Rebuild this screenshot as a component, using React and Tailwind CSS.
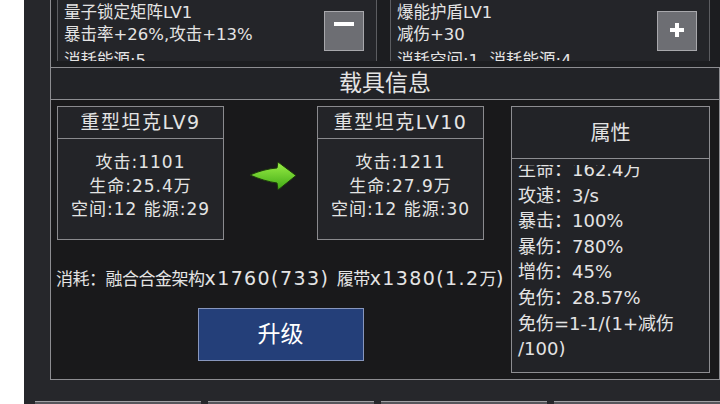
import { Fragment } from 'react'

const MODULES = [
  { name: '量子锁定矩阵LV1', effect: '暴击率+26%,攻击+13%', cost: '消耗能源:5', action: 'minus' },
  { name: '爆能护盾LV1', effect: '减伤+30', cost: '消耗空间:1, 消耗能源:4', action: 'plus' },
]

const TANKS = [
  { title: '重型坦克LV9', atk: '1101', hp: '25.4万', space: 12, energy: 29 },
  { title: '重型坦克LV10', atk: '1211', hp: '27.9万', space: 12, energy: 30 },
]

const ATTRS = [
  ['生命', '162.4万'],
  ['攻速', '3/s'],
  ['暴击', '100%'],
  ['暴伤', '780%'],
  ['增伤', '45%'],
  ['免伤', '28.57%'],
]

function ModuleCard({ mod }) {
  return (
    <div className="w-[320px] shrink-0 flex border border-[#5c5d61] bg-[#242529] pl-[6px] pr-[12px] pt-[5px] pb-[6px]">
      <div className="flex-1 min-w-0 text-[16.5px] leading-[22px] whitespace-nowrap">
        <div>{mod.name}</div>
        <div>{mod.effect}</div>
        <div className="mt-[4px]">{mod.cost}</div>
      </div>
      <button className="w-[40px] h-[40px] mt-[9px] shrink-0 flex justify-center bg-[#6d6e73] border border-[#a8a8ac]">
        {mod.action === 'minus' ? (
          <span className="mt-[10px] w-[20px] h-[4px] bg-white" />
        ) : (
          <svg width="14" height="14" viewBox="0 0 14 14" className="mt-[11px]">
            <path d="M5 0h4v5h5v4H9v5H5V9H0V5h5z" fill="#fff" />
          </svg>
        )}
      </button>
    </div>
  )
}

function TankCard({ tank }) {
  return (
    <div className="w-[167px] h-[134px] shrink-0 flex flex-col border border-[#8a8a8e] bg-[#232428]">
      <div className="h-[32px] shrink-0 flex items-center justify-center border-b border-[#8a8a8e] text-[19px] tracking-[1.5px]">
        {tank.title}
      </div>
      <div className="flex-1 pt-[12px] text-center text-[17px] leading-[23.5px] tracking-[1px]">
        <div>攻击:{tank.atk}</div>
        <div>生命:{tank.hp}</div>
        <div>空间:{tank.space} 能源:{tank.energy}</div>
      </div>
    </div>
  )
}

function UpgradeArrow() {
  return (
    <svg width="50" height="32" viewBox="0 0 50 32">
      <defs>
        <linearGradient id="arrowFill" x1="0" y1="0" x2="0" y2="1">
          <stop offset="0" stopColor="#9bef46" />
          <stop offset="1" stopColor="#3fa815" />
        </linearGradient>
      </defs>
      <path
        d="M2 15 C11 11 21 8.5 29 8 L30 2 L48 15.5 L30 30 L29 23 C21 22 11 19 2 15 Z"
        fill="url(#arrowFill)"
        stroke="#1d3a0c"
        strokeWidth="1"
      />
    </svg>
  )
}

export default function App() {
  return (
    <div className="w-[720px] h-[404px] flex overflow-hidden bg-white text-[#e4e4e4] font-['DejaVu_Sans','Noto_Sans_CJK_SC',sans-serif]">
      <div className="w-[24px] shrink-0" />
      <div className="flex-1 flex flex-col bg-[#26272b]">
        {/* equipped modules (list scrolled) */}
        <div className="ml-[26px] h-[67px] shrink-0 border-l border-[#8d8d91] bg-[#1c1d20]">
          <div className="h-[61px] overflow-hidden">
            <div className="flex gap-[13px] pl-[6px] -mt-[4px]">
              {MODULES.map(m => <ModuleCard key={m.name} mod={m} />)}
            </div>
          </div>
        </div>

        {/* vehicle info panel */}
        <div className="ml-[26px] w-[670px] h-[313px] shrink-0 flex flex-col border border-[#8d8d91]">
          <div className="h-[32px] shrink-0 flex items-center justify-center border-b border-[#8d8d91] bg-[#222327] text-[23px]">
            载具信息
          </div>
          <div className="flex-1 flex gap-[7px] p-[6px] bg-[#19191b]">
            <div className="w-[447px] shrink-0 flex flex-col">
              <div className="flex">
                <TankCard tank={TANKS[0]} />
                <div className="w-[93px] shrink-0 flex items-center justify-center pl-[4px] pt-[5px]">
                  <UpgradeArrow />
                </div>
                <TankCard tank={TANKS[1]} />
              </div>
              <p className="mt-[25px] -ml-[1px] leading-[26px] whitespace-nowrap text-[19px] tracking-[1.4px]">
                <span className="text-[17px] tracking-[-0.5px]">消耗：融合合金架构</span>x1760(733){' '}
                <span className="text-[17px] tracking-[-0.5px]">履带</span>x1380(1.2
                <span className="text-[17px] tracking-[-0.5px]">万</span>)
              </p>
              <button className="mt-[16px] mx-auto w-[166px] h-[53px] flex items-center justify-center bg-[#243f79] border border-[#8796bd] text-[23px] text-white">
                升级
              </button>
            </div>

            <div className="w-[199px] shrink-0 flex flex-col border border-[#8d8d91] bg-[#222327]">
              <div className="h-[52px] shrink-0 flex items-center justify-center border-b border-[#8d8d91] text-[20px]">
                属性
              </div>
              <div className="flex-1 mt-[6px] overflow-hidden">
                <div className="-mt-[8px] px-[6px] text-[18px] leading-[25.6px]">
                  {ATTRS.map(([k, v]) => (
                    <Fragment key={k}>
                      <div>{k}：{v}</div>
                    </Fragment>
                  ))}
                  <div>免伤=1-1/(1+减伤</div>
                  <div>/100)</div>
                </div>
              </div>
            </div>
          </div>
        </div>

        {/* bottom tab strip, mostly off-screen */}
        <div className="mt-[21px] pl-[11px] flex gap-[7px]">
          {[0, 1, 2, 3].map(i => (
            <div key={i} className="w-[166px] h-[3px] bg-[#55565b] border-t border-[#a0a0a4]" />
          ))}
        </div>
      </div>
    </div>
  )
}
